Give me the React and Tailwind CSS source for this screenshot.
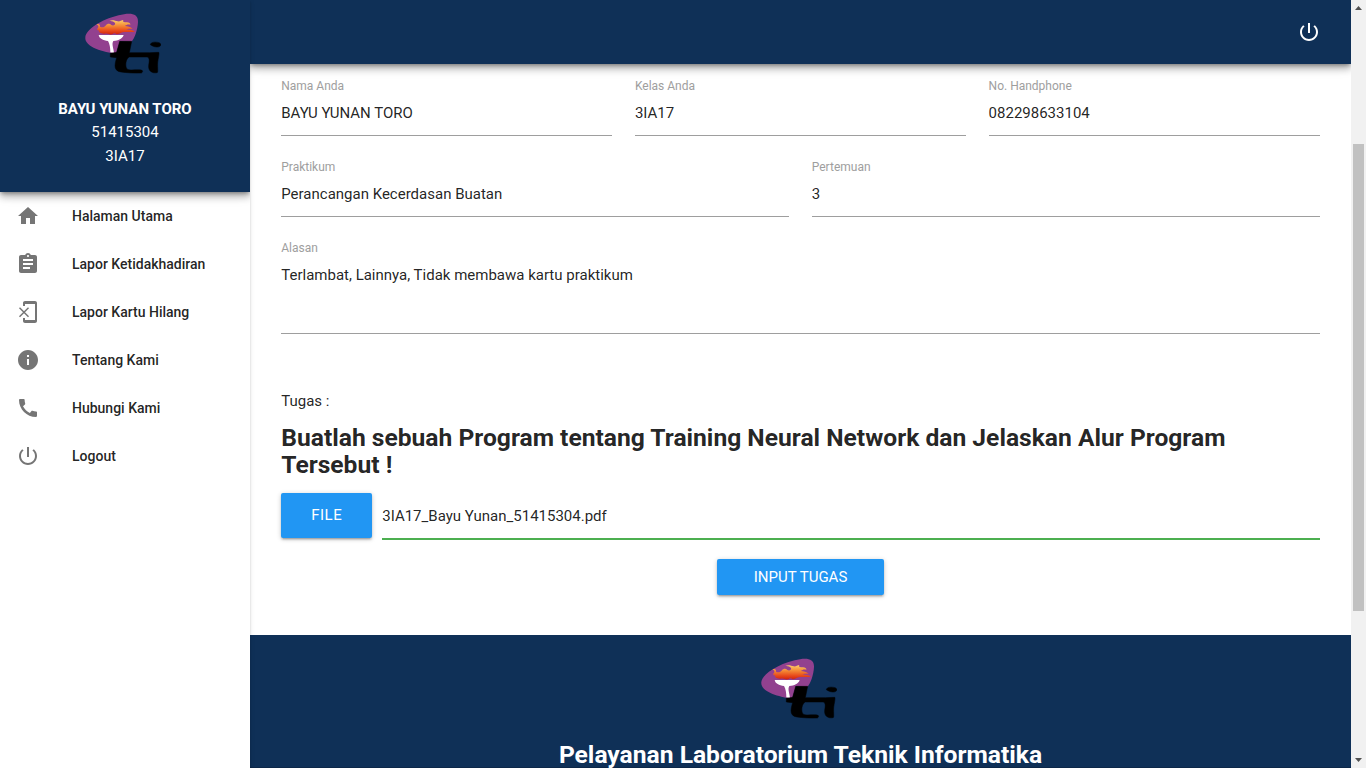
const NAV = [
  ["Halaman Utama", "M10 20v-6h4v6h5v-8h3L12 3 2 12h3v8z"],
  ["Lapor Ketidakhadiran", "M19 3h-4.18C14.4 1.84 13.3 1 12 1c-1.3 0-2.4.84-2.82 2H5c-1.1 0-2 .9-2 2v14c0 1.1.9 2 2 2h14c1.1 0 2-.9 2-2V5c0-1.1-.9-2-2-2zm-7 0c.55 0 1 .45 1 1s-.45 1-1 1-1-.45-1-1 .45-1 1-1zm2 14H7v-2h7v2zm3-4H7v-2h10v2zm0-4H7V7h10v2z"],
  ["Lapor Kartu Hilang", "M13 8.2l-1-1-4 4-4-4-1 1 4 4-4 4 1 1 4-4 4 4 1-1-4-4 4-4zM19 1H9c-1.1 0-2 .9-2 2v3h2V4h10v16H9v-2H7v3c0 1.1.9 2 2 2h10c1.1 0 2-.9 2-2V3c0-1.1-.9-2-2-2z"],
  ["Tentang Kami", "M12 2C6.48 2 2 6.48 2 12s4.48 10 10 10 10-4.48 10-10S17.52 2 12 2zm1 15h-2v-6h2v6zm0-8h-2V7h2v2z"],
  ["Hubungi Kami", "M20.01 15.38c-1.23 0-2.42-.2-3.53-.56-.35-.12-.74-.03-1.01.24l-1.57 1.97c-2.83-1.35-5.48-3.9-6.89-6.83l1.95-1.66c.27-.28.35-.67.24-1.02-.37-1.11-.56-2.3-.56-3.53 0-.54-.45-.99-.99-.99H4.19C3.65 3 3 3.24 3 3.99 3 13.28 10.73 21 20.01 21c.71 0 .99-.63.99-1.18v-3.45c0-.54-.45-.99-.99-.99z"],
];
const POWER = "M13 3h-2v10h2V3zm4.83 2.17l-1.42 1.42C17.99 7.86 19 9.81 19 12c0 3.87-3.13 7-7 7s-7-3.13-7-7c0-2.19 1.01-4.14 2.58-5.42L6.17 5.17C4.23 6.82 3 9.26 3 12c0 4.97 4.03 9 9 9s9-4.03 9-9c0-2.74-1.23-5.18-3.17-6.83z";

function Icon({ d, className = "" }) {
  return (
    <svg viewBox="0 0 24 24" className={`size-6 shrink-0 ${className}`} fill="currentColor">
      <path d={d} />
    </svg>
  );
}

function Logo({ id }) {
  return (
    <svg viewBox="42 36 231 186" className="block h-[62px] w-[77px]">
      <defs>
        <linearGradient id={id} gradientUnits="userSpaceOnUse" x1="0" y1="60" x2="0" y2="103">
          <stop offset="0" stopColor="#fbcf6a" />
          <stop offset="0.4" stopColor="#f48a35" />
          <stop offset="0.75" stopColor="#e8491b" />
          <stop offset="1" stopColor="#cf2410" />
        </linearGradient>
      </defs>
      <path d="M46 111C50 88 90 60 146 46C178 38 205 38 204 66C203 90 193 117 184 126L150 124L138 161C104 157 42 142 46 111Z" fill="#92418f" />
      <path d="M80 73C85 70 92 73 90 80C96 84 104 82 108 76C112 70 120 70 124 75C130 78 137 75 135 69C132 64 124 62 118 63C126 58 136 62 143 64C150 65 154 61 160 60C157 66 163 67 168 67C176 66 182 69 181 75C175 72 170 75 164 78C172 79 182 80 188 87C182 85 172 86 168 88C178 90 188 90 195 95C181 98 170 94 158 97C151 99 147 103 140 103C136 99 131 99 127 103C119 105 113 98 104 101C93 102 84 97 88 91C82 92 79 87 84 83C87 80 84 75 80 73Z" fill={`url(#${id})`} />
      <path d="M86 105H161C157 117 145 122 130 123C124 132 131 145 132 159L121 157C121 143 119 131 114 123C99 121 88 116 86 105Z" fill="#fff" />
      <path stroke="#000" strokeWidth="1.5" d="M149 124H185L178 158H239L266 157C269 158 264 178 263 188C262 203 265 218 261 218C245 221 235 212 236 198C237 187 241 175 232 171H178C168 175 164 197 171 207C177 213 206 207 216 211C219 213 218 217 214 219C190 220 170 218 153 216C131 213 133 195 140 173L121 171V160L140 157Z" />
      <path stroke="#000" strokeWidth="1.5" d="M241 134C242 126 256 125 267 128C277 132 273 141 261 141C252 141 246 137 241 134Z" />
    </svg>
  );
}

function Field({ label, value, className = "h-[81px]", area = false }) {
  return (
    <label className={`block min-w-0 flex-1 ${className}`}>
      <span className="block h-[15px] text-[12px] leading-[15px] text-[#9e9e9e]">{label}</span>
      <span className={`block border-b border-[#9e9e9e] pt-[8px] text-[15px] leading-[22.5px] ${area ? "h-[78px]" : "h-[42px]"}`}>{value}</span>
    </label>
  );
}

export default function App() {
  return (
    <div className="flex h-[768px] w-[1366px] overflow-hidden bg-white font-['Roboto',sans-serif] text-[15px] leading-[22.5px] text-[rgba(0,0,0,0.87)]">
      <aside className="z-10 flex w-[250px] shrink-0 flex-col overflow-hidden bg-white shadow-[0_2px_2px_0_rgba(0,0,0,0.14),0_1px_5px_0_rgba(0,0,0,0.1)]">
        <div className="flex h-[192px] shrink-0 flex-col items-center bg-[#0f3057] pt-[12px] text-white shadow-[0_5px_7px_0_rgba(0,0,0,0.2),0_2px_12px_0_rgba(0,0,0,0.18),0_2px_4px_-1px_rgba(0,0,0,0.35)]">
          <div className="pr-[6px]"><Logo id="flame-side" /></div>
          <div className="mt-[23.5px] text-center leading-[23.5px]">
            <div className="font-bold">BAYU YUNAN TORO</div>
            <div>51415304</div>
            <div>3IA17</div>
          </div>
        </div>
        <nav className="text-[14px] font-medium">
          {[...NAV, ["Logout", POWER]].map(([label, d]) => (
            <a key={label} className="flex h-12 items-center gap-8 pl-4">
              <Icon d={d} className="text-[#757575]" />
              {label}
            </a>
          ))}
        </nav>
      </aside>
      <div className="flex min-w-0 flex-1 flex-col">
        <header className="flex h-16 shrink-0 items-center justify-end bg-[#0f3057] pr-[30px] text-white shadow-[0_5px_7px_0_rgba(0,0,0,0.2),0_2px_12px_0_rgba(0,0,0,0.18),0_2px_4px_-1px_rgba(0,0,0,0.35)]">
          <Icon d={POWER} />
        </header>
        <main className="flex h-[571px] shrink-0 flex-col px-[31.25px] pt-[15px]">
          <div className="flex gap-[22.5px]">
            <Field label="Nama Anda" value="BAYU YUNAN TORO" />
            <Field label="Kelas Anda" value="3IA17" />
            <Field label="No. Handphone" value="082298633104" />
          </div>
          <div className="flex gap-[22.5px]">
            <Field label="Praktikum" value="Perancangan Kecerdasan Buatan" />
            <Field label="Pertemuan" value="3" />
          </div>
          <div className="flex">
            <Field label="Alasan" value="Terlambat, Lainnya, Tidak membawa kartu praktikum" className="h-[149px]" area />
          </div>
          <p>Tugas :</p>
          <h1 className="mt-[11px] text-[24.62px] leading-[27px] font-bold">
            Buatlah sebuah Program tentang Training Neural Network dan Jelaskan Alur Program Tersebut !
          </h1>
          <div className="mt-[15px] flex h-[47px] gap-[10px]">
            <button className="h-[45px] w-[91px] rounded-[2px] bg-[#2196f3] text-[15px] tracking-[0.5px] text-white shadow-[0_2px_2px_0_rgba(0,0,0,0.14),0_3px_1px_-2px_rgba(0,0,0,0.12),0_1px_5px_0_rgba(0,0,0,0.2)]">FILE</button>
            <div className="flex-1 border-b-2 border-[#4caf50] pt-[12px]">3IA17_Bayu Yunan_51415304.pdf</div>
          </div>
          <button className="mt-[19px] h-9 w-[167px] self-center rounded-[2px] bg-[#2196f3] pt-px text-[15px] text-white shadow-[0_2px_2px_0_rgba(0,0,0,0.14),0_3px_1px_-2px_rgba(0,0,0,0.12),0_1px_5px_0_rgba(0,0,0,0.2)]">INPUT TUGAS</button>
        </main>
        <footer className="flex min-h-0 flex-1 flex-col items-center overflow-hidden bg-[#0f3057] pt-[22px] text-white shadow-[inset_0_-1px_0_#0c2748]">
          <div className="pr-1"><Logo id="flame-foot" /></div>
          <h2 className="mt-[22px] shrink-0 text-[24.62px] leading-[27px] font-bold">Pelayanan Laboratorium Teknik Informatika</h2>
        </footer>
      </div>
      <div className="flex w-[15px] shrink-0 flex-col items-center bg-[#f1f1f1]">
        <svg viewBox="0 0 15 15" className="h-[15px] w-[15px]"><path d="M4 10h7L7.500 6z" fill="#505050" /></svg>
        <div className="mt-[129px] h-[467px] w-[11px] bg-[#c1c1c1]" />
        <svg viewBox="0 0 15 15" className="mt-auto h-[15px] w-[15px]"><path d="M4 5h7L7.500 9z" fill="#505050" /></svg>
      </div>
    </div>
  );
}
